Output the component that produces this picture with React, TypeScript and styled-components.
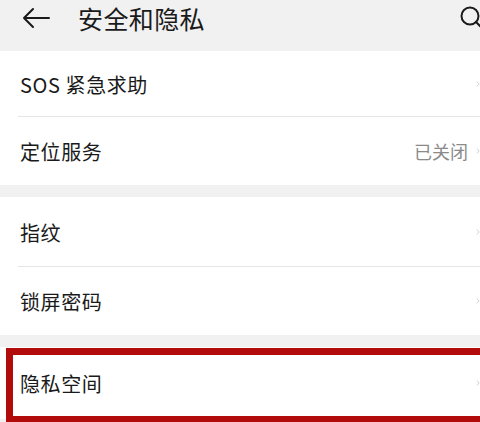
import React from 'react'
import styled, {createGlobalStyle} from 'styled-components'

const GlobalStyle = createGlobalStyle`
  html, body {
    margin: 0;
    padding: 0;
    background: #f1f1f1;
    overflow: hidden;
  }
  body {
    font-family: "Noto Sans CJK SC", "Noto Sans", sans-serif;
    color: #1a1a1a;
  }
`

const Page = styled.div`
  width: 480px;
  height: 422px;
  overflow: hidden;
  background: #f1f1f1;
  display: flex;
  flex-direction: column;
`

const Header = styled.header`
  height: 36px;
  padding: 0 0 15px 22px;
  display: flex;
  align-items: center;
`

const BackButton = styled.button`
  border: none;
  background: none;
  padding: 0;
  width: 30px;
  height: 22px;
  display: flex;
  align-items: center;
  color: #1a1a1a;
`

const Title = styled.h1`
  margin: 0 0 0 26px;
  font-size: 25px;
  font-weight: 400;
  letter-spacing: 0.4px;
  flex: 1;
`

const SearchButton = styled.button`
  border: none;
  background: none;
  padding: 0;
  margin-right: -20px;
  width: 40px;
  height: 24px;
  display: flex;
  align-items: center;
  justify-content: flex-start;
  color: #1a1a1a;
`

const Section = styled.section<{$gap?: number}>`
  background: #fff;
  margin-bottom: ${(p) => p.$gap ?? 0}px;
`

const Row = styled.div<{$height: number; $divider?: boolean}>`
  height: ${(p) => p.$height}px;
  display: flex;
  align-items: center;
  padding-left: 20px;
  position: relative;
  ${(p) =>
    p.$divider &&
    `
    &::after {
      content: '';
      position: absolute;
      left: 18px;
      right: 0;
      bottom: 0;
      height: 1px;
      background: #e6e6e6;
    }
  `}
`

const Label = styled.span`
  flex: 1;
  font-size: 20px;
  letter-spacing: 0.6px;
`

const Value = styled.span`
  font-size: 18px;
  color: #8a8a8a;
  margin-right: 8px;
`

const Chevron = styled.span`
  width: 4px;
  height: 20px;
  overflow: hidden;
  display: flex;
  color: #b5b5b5;
`

const Highlight = styled.div`
  position: relative;
  &::after {
    content: '';
    position: absolute;
    left: 6px;
    right: -20px;
    top: 1px;
    bottom: -4px;
    border: 7px solid #b10b0b;
    pointer-events: none;
  }
`

const ChevronIcon = () => (
  <Chevron>
    <svg width="10" height="20" viewBox="0 0 10 20">
      <path d="M2 4 L8 10 L2 16" fill="none" stroke="currentColor" strokeWidth="1.6" />
    </svg>
  </Chevron>
)

type Item = {label: string; value?: string}

const SettingsGroup = ({items, gap, heights}: {items: Item[]; gap?: number; heights: number[]}) => (
  <Section $gap={gap}>
    {items.map((item, i) => (
      <Row key={item.label} $height={heights[i]} $divider={i < items.length - 1}>
        <Label>{item.label}</Label>
        {item.value && <Value>{item.value}</Value>}
        <ChevronIcon />
      </Row>
    ))}
  </Section>
)

const App = () => {
  return (
    <Page>
      <GlobalStyle />
      <Header>
        <BackButton aria-label="返回">
          <svg width="28" height="22" viewBox="0 0 28 22">
            <path
              d="M27 11 H2 M11 2 L2 11 L11 20"
              fill="none"
              stroke="currentColor"
              strokeWidth="2"
              strokeLinecap="round"
              strokeLinejoin="round"
            />
          </svg>
        </BackButton>
        <Title>安全和隐私</Title>
        <SearchButton aria-label="搜索">
          <svg width="28" height="24" viewBox="0 0 28 24">
            <circle cx="10" cy="10" r="8.5" fill="none" stroke="currentColor" strokeWidth="2" />
            <path d="M16 16 L22 22" stroke="currentColor" strokeWidth="2" strokeLinecap="round" />
          </svg>
        </SearchButton>
      </Header>
      <SettingsGroup
        gap={12}
        heights={[66, 68]}
        items={[{label: 'SOS 紧急求助'}, {label: '定位服务', value: '已关闭'}]}
      />
      <SettingsGroup gap={12} heights={[70, 68]} items={[{label: '指纹'}, {label: '锁屏密码'}]} />
      <Section>
        <Highlight>
          <Row $height={72}>
            <Label>隐私空间</Label>
            <ChevronIcon />
          </Row>
        </Highlight>
      </Section>
    </Page>
  )
}

export default App
